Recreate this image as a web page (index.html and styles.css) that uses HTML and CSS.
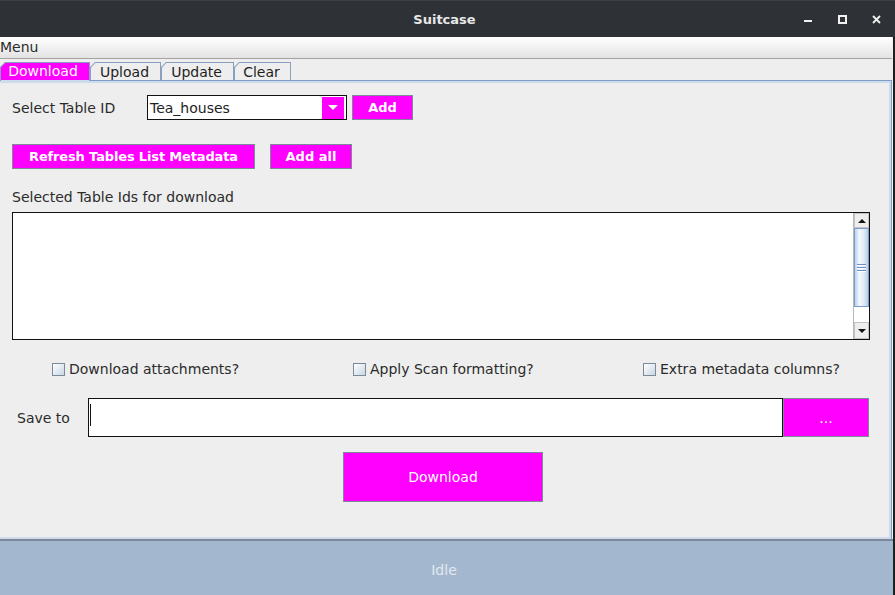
FILE: index.html
```html
<!DOCTYPE html>
<html>
<head>
<meta charset="utf-8">
<link rel="stylesheet" href="styles.css">
</head>
<body>
<div class="window">
  <header class="titlebar">
    <div></div>
    <div class="title">Suitcase</div>
    <div class="controls">
      <svg class="ctl" width="9" height="9" viewBox="0 0 9 9"><rect x="0" y="5" width="8" height="2" fill="#f2f2f2"/></svg>
      <svg class="ctl" width="9" height="9" viewBox="0 0 9 9"><rect x="1" y="1" width="7" height="7" fill="none" stroke="#f2f2f2" stroke-width="2"/></svg>
      <svg class="ctl" width="9" height="9" viewBox="0 0 9 9"><path d="M1 1L8 8M8 1L1 8" stroke="#f2f2f2" stroke-width="1.8"/></svg>
    </div>
  </header>
  <div class="frame">
    <div class="menubar"><span class="menu">Menu</span></div>
    <div class="tabs">
      <div class="tab sel w1"><div class="tab-in">Download</div></div>
      <div class="tab w2"><div class="tab-in">Upload</div></div>
      <div class="tab w3"><div class="tab-in">Update</div></div>
      <div class="tab w4"><div class="tab-in">Clear</div></div>
    </div>
    <div class="panel">
      <div class="panel-in">
        <div class="row row1">
          <span class="lbl lbl-id">Select Table ID</span>
          <div class="combo">
            <span class="combo-text">Tea_houses</span>
            <span class="combo-btn"><svg width="10" height="5" viewBox="0 0 10 5"><path d="M0 0H10L5 5Z" fill="#fff"/></svg></span>
          </div>
          <button class="btn btn-add">Add</button>
        </div>
        <div class="row row2">
          <button class="btn btn-refresh">Refresh Tables List Metadata</button>
          <button class="btn btn-addall">Add all</button>
        </div>
        <div class="lbl lbl-sel">Selected Table Ids for download</div>
        <div class="textarea">
          <div class="ta-body"></div>
          <div class="scrollbar">
            <div class="sb-btn sb-up"><svg width="8" height="4" viewBox="0 0 8 4"><path d="M0 4H8L4 0Z" fill="#111"/></svg></div>
            <div class="sb-thumb"><span class="grip"></span><span class="grip"></span><span class="grip"></span></div>
            <div class="sb-track"></div>
            <div class="sb-btn sb-down"><svg width="8" height="4" viewBox="0 0 8 4"><path d="M0 0H8L4 4Z" fill="#111"/></svg></div>
          </div>
        </div>
        <div class="checks">
          <label class="chk"><span class="box"></span>Download attachments?</label>
          <label class="chk"><span class="box"></span>Apply Scan formatting?</label>
          <label class="chk"><span class="box"></span>Extra metadata columns?</label>
        </div>
        <div class="row save">
          <span class="lbl lbl-save">Save to</span>
          <div class="field"><span class="caret"></span></div>
          <button class="btn btn-dots">...</button>
        </div>
        <button class="btn btn-dl">Download</button>
      </div>
    </div>
    <div class="status">Idle</div>
  </div>
</div>
</body>
</html>
```

FILE: styles.css
```css
* { box-sizing: border-box; margin: 0; padding: 0; }
html, body { width: 895px; height: 595px; overflow: hidden; background: #2e3236; }
body { font-family: "DejaVu Sans", "Liberation Sans", sans-serif; font-size: 14px; color: #2b2b2b; }

.window { width: 895px; height: 595px; display: flex; flex-direction: column; }

.titlebar {
  height: 37px;
  background: #2e3236;
  border-top: 1px solid #3c4044;
  display: grid;
  grid-template-columns: 1fr auto 1fr;
  align-items: center;
  color: #e8e8e8;
}
.title { font-weight: bold; font-size: 13px; margin-right: 6px; }
.controls { justify-self: end; display: flex; gap: 25px; padding-right: 14px; }
.ctl { display: block; }

.frame {
  width: 895px;
  flex: 1;
  background: #eeeeee;
  border-right: 2px solid #1d1f21;
  display: flex;
  flex-direction: column;
}

.menubar {
  height: 22px;
  background: linear-gradient(#ffffff, #e3e3e3);
  border-bottom: 1px solid #a3a3a3;
  display: flex;
  align-items: center;
  width: 892px;
}
.menu { font-size: 14px; line-height: 21px; color: #2b2b2b; }

.tabs { height: 21px; padding-top: 3px; display: flex; align-items: flex-end; }
.tab {
  height: 18px;
  background: #8a9fbf;
  padding: 1px 1px 0 1px;
  clip-path: polygon(5px 0, 100% 0, 100% 100%, 0 100%, 0 5px);
}
.tab-in {
  height: 100%;
  background: #eeeeee;
  clip-path: polygon(4.4px 0, 100% 0, 100% 100%, 0 100%, 0 4.4px);
  text-align: center;
  line-height: 18px;
  color: #1e1e1e;
  padding-right: 2px;
}
.tab.sel { height: 19px; margin-bottom: -1px; position: relative; z-index: 1; }
.tab.sel .tab-in { background: #ff00ff; color: #fff; border-bottom: 1px solid #cddbeb; line-height: 17px; padding-right: 4px; }
.w1 { width: 90px; }
.w2 { width: 71px; }
.w3 { width: 73px; }
.w4 { width: 57px; }

.panel { width: 892px; height: 459px; border-top: 1px solid #7f9bc8; border-right: 1px solid #7f9bc8; }
.panel-in {
  height: 458px;
  border-top: 2px solid #cddbeb;
  border-right: 2px solid #cddbeb;
  border-bottom: 2px solid #cddbeb;
  padding-left: 12px;
  display: flex;
  flex-direction: column;
  align-items: flex-start;
}

.row { display: flex; align-items: center; }
.row1 { margin-top: 12px; height: 25px; }
.lbl { color: #2b2b2b; font-size: 14px; }
.lbl-id { width: 135px; }

.combo {
  width: 200px; height: 25px;
  background: #fff;
  border: 1px solid #111;
  display: flex; align-items: center;
  padding: 0 1px 0 1px;
}
.combo-text { flex: 1; color: #1e1e1e; padding-left: 1px; }
.combo-btn { width: 22px; height: 22px; background: #ff00ff; display: flex; align-items: center; justify-content: center; margin-right: 1px; }
.combo-btn svg { display: block; }

.btn {
  background: #ff00ff;
  border: 1px solid #7a8a99;
  color: #fff;
  font-family: "DejaVu Sans", sans-serif;
  font-weight: bold;
  font-size: 13px;
  height: 25px;
}
.btn-add { width: 61px; margin-left: 5px; }
.row2 { margin-top: 24px; height: 25px; }
.btn-refresh { width: 243px; letter-spacing: -0.15px; }
.btn-addall { width: 82px; margin-left: 15px; }

.lbl-sel { margin-top: 20px; line-height: 16px; }

.textarea {
  margin-top: 7px;
  width: 858px; height: 128px;
  border: 1px solid #111;
  background: #fff;
  display: flex;
}
.ta-body { flex: 1; }
.scrollbar { width: 16px; display: flex; flex-direction: column; border-left: 1px solid #b8b8b8; }
.sb-btn { background: #eeeeee; display: flex; align-items: center; justify-content: center; border: 1px solid #c4c4c4; }
.sb-btn svg { display: block; }
.sb-up { height: 15px; }
.sb-down { height: 17px; }
.sb-thumb {
  height: 79px;
  border: 1px solid #7b9bd1;
  background: linear-gradient(90deg, #bcd2ea, #f4f8fc 35%, #dfeaf6 70%, #b6cde8);
  display: flex; flex-direction: column; align-items: center; justify-content: center; gap: 1px;
}
.grip { width: 9px; height: 1px; background: #6d8cc8; box-shadow: 0 1px 0 #ffffff; margin-bottom: 1px; }
.sb-track { flex: 1; background: #fff; }

.checks {
  margin-top: 21px;
  height: 16px;
  padding-left: 40px;
  display: grid;
  grid-template-columns: 301px 290px auto;
  align-items: center;
}
.chk { display: flex; align-items: center; gap: 4px; color: #2b2b2b; font-size: 14px; line-height: 16px; }
.box {
  width: 13px; height: 13px;
  border: 1px solid #7a8a99;
  background: linear-gradient(135deg, #ffffff, #c9d6e4);
}

.save { margin-top: 21px; height: 39px; }
.lbl-save { width: 76px; padding-left: 5px; }
.field { width: 695px; height: 39px; background: #fff; border: 1px solid #111; display: flex; align-items: center; }
.caret { width: 1px; height: 22px; background: #111; margin-left: 1px; margin-top: -5px; }
.btn-dots { width: 86px; height: 39px; margin-left: 0; font-weight: normal; font-size: 14px; }

.btn-dl { margin-top: 15px; margin-left: 331px; width: 200px; height: 50px; font-weight: normal; font-size: 14px; }

.status {
  width: 893px;
  flex: 1;
  border-top: 2px solid #7b8799;
  background: #a3b8cf;
  color: #e2e8f0;
  display: flex; align-items: center; justify-content: center;
  font-size: 14px;
  padding-top: 4px;
  padding-right: 5px;
}
```
